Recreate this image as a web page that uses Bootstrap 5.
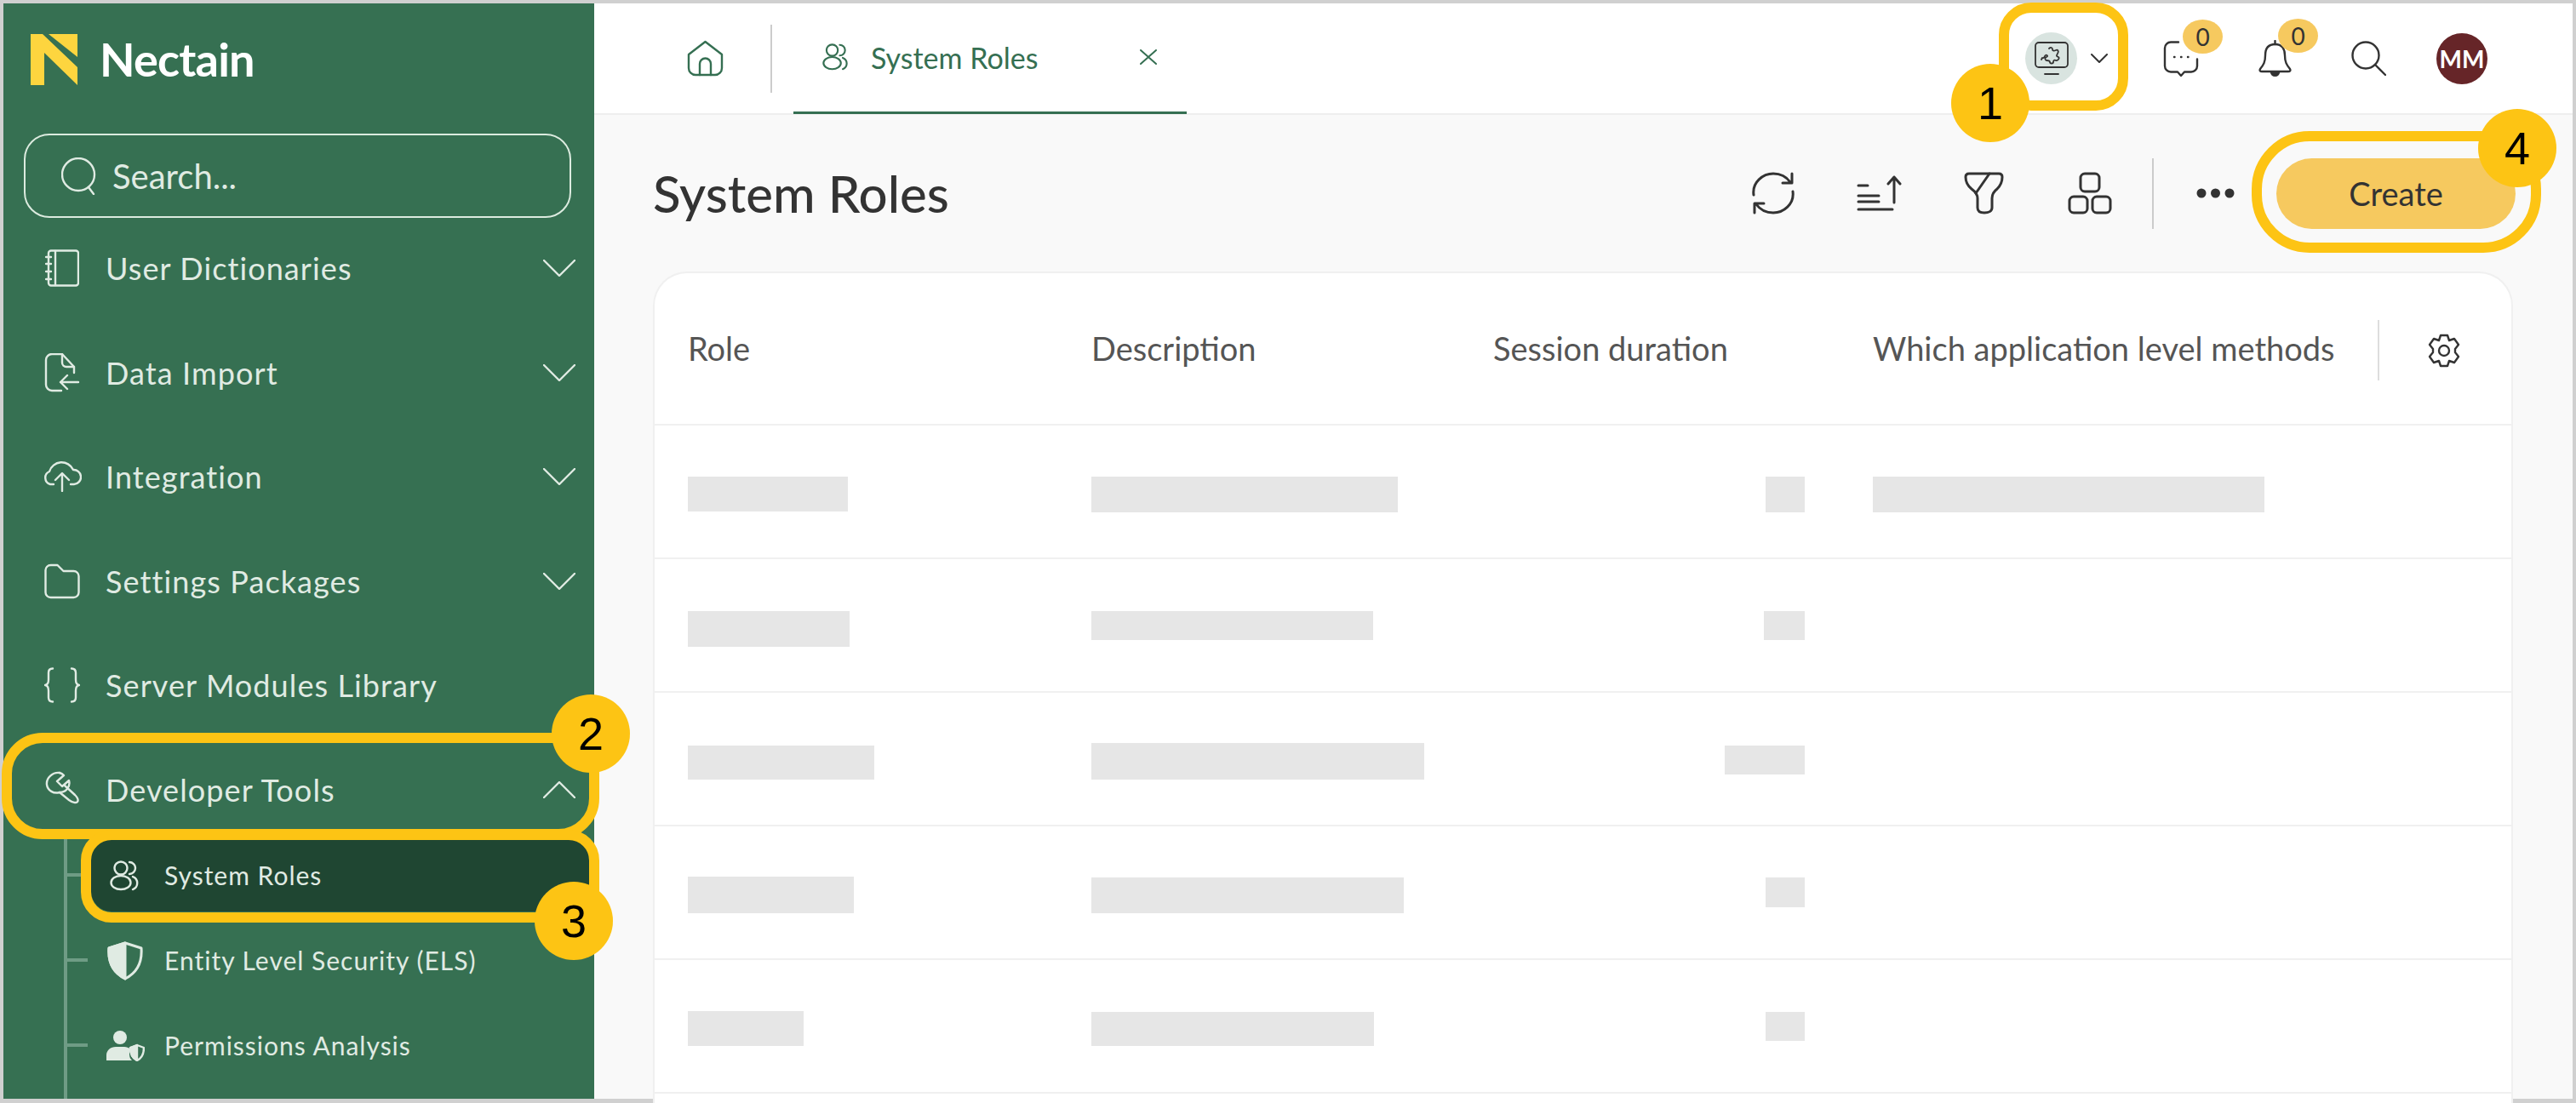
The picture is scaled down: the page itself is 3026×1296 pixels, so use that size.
<!DOCTYPE html>
<html lang="en">
<head>
  <meta charset="UTF-8">
  <title>System Roles - Nectain</title>
  <link href="https://cdn.jsdelivr.net/npm/bootstrap@5.3.3/dist/css/bootstrap.min.css" rel="stylesheet">
  <style>
    html, body { width: 3026px; height: 1296px; overflow: hidden; }
    body { font-family: Lato, "Liberation Sans", sans-serif; background: #fff; color: #333; position: relative; }
    svg { display: block; flex: none; fill: none; stroke: currentColor; stroke-width: 2.4; stroke-linecap: round; stroke-linejoin: round; }

    .frame { height: 1296px; border: 4px solid #d0d0d0; border-bottom-width: 5px; }

    /* sidebar */
    .side { width: 694px; height: 100%; background: #367052; color: #e0ebe3; overflow: hidden; }
    .brand { height: 153px; padding: 36px 0 0 32px; gap: 26px; }
    .brand-name { font-size: 54px; font-weight: 700; color: #fff; line-height: 60px; letter-spacing: -.8px; }
    .side-search { height: 99px; margin: 0 27px -2px 24px; border: 2px solid #dcebdf; border-radius: 30px; padding-left: 42px; gap: 18px; font-size: 40px; }
    .side-item { height: 122.5px; padding-left: 48px; font-size: 36px; letter-spacing: 1.1px; }
    .side-ico { width: 42px; margin-right: 30px; display: flex; justify-content: center; }
    .side-chev { margin-left: auto; margin-right: 22px; }
    .sub-list { margin: -3px 0 0 71px; border-left: 4px solid #6f9c85; height: 320px; }
    .sub-item { position: relative; height: 85px; margin: 0 6px 15px 28px; padding-left: 15px; border-radius: 24px; font-size: 30px; letter-spacing: 1px; }
    .sub-item::before { content: ""; position: absolute; left: -28px; top: 40px; width: 24px; height: 4px; background: #6f9c85; }
    .sub-item.active { background: #1f4632; }
    .sub-ico { width: 50px; margin-right: 21px; display: flex; justify-content: center; }

    /* top bar */
    .top-bar { height: 131px; background: #fff; border-bottom: 2px solid #eee; padding-left: 109px; padding-right: 100px; }
    .tab-sep { width: 2px; height: 80px; background: #ccc; margin-left: 55px; }
    .tab-on { width: 462px; height: 131px; margin-left: 25px; padding-left: 34px; border-bottom: 3px solid #356f52; color: #356f52; font-size: 34px; }
    .tab-on span { margin-left: 25px; }
    .tab-close { margin-left: auto; margin-right: 35px; }
    .env-dot { width: 61px; height: 61px; border-radius: 50%; background: #d9e4e0; color: #333; }
    .top-ico { position: relative; color: #333; }
    .top-count { position: absolute; top: -25px; left: 23px; width: 47px; height: 40px; border-radius: 50%; background: #f6c95f; font-size: 28px; line-height: 40px; text-align: center; color: #333; }
    .avatar { width: 60px; height: 60px; border-radius: 50%; background: #662528; color: #fff; font-size: 28px; font-weight: 700; }

    /* page */
    .page-area { background: #f9f9f9; min-width: 0; height: 1156px; }
    .tool-bar { height: 184px; padding: 0 67px 0 69px; color: #333; }
    .page-title { font-size: 60px; font-weight: 500; line-height: 1; color: #333; margin: 0; }
    .tool-sep { width: 2px; height: 83px; background: #ccc; }
    .btn-create { width: 281px; height: 83px; border: 0; border-radius: 42px; background: #f6c95f; color: #333; font-size: 38px; padding: 0; }
    .btn-create:hover { background: #f6c95f; color: #333; }

    .list-card { margin: 0 70px 0 69px; height: 980px; background: #fff; border: 2px solid #f0f0f0; border-bottom: 0; border-radius: 40px 40px 0 0; overflow: hidden; }
    .list-card .table { table-layout: fixed; width: 100%; margin: 0; --bs-table-bg: transparent; --bs-table-border-color: #f0f0f0; }
    .list-card th { height: 178px; font-size: 38px; font-weight: 400; color: #555; padding: 0 0 0 20px; vertical-align: middle; white-space: nowrap; border-bottom-width: 2px; }
    .list-card td { height: 157px; padding: 0 0 0 20px; vertical-align: middle; border-bottom-width: 2px; }
    .list-card th:first-child, .list-card td:first-child { padding-left: 39px; }
    .list-card td.col-time { padding-right: 60px; }
    .last-col { position: relative; }
    .last-col::after { content: ""; position: absolute; right: 0; top: 55px; height: 71px; width: 2px; background: #ddd; }
    .ske-bar { background: #e6e6e6; }
    .col-time .ske-bar { margin-left: auto; }

    /* numbered callouts drawn over the screenshot */
    .callout { position: absolute; border: 12px solid #fdc414; z-index: 5; }
    .call-num { position: absolute; z-index: 6; width: 92px; height: 92px; border-radius: 50%; background: #fdc414; color: #000; font-family: "Liberation Sans", Arial, sans-serif; font-size: 54px; line-height: 92px; text-align: center; }
  </style>
</head>
<body>
  <div class="frame d-flex">
    <aside class="side flex-shrink-0">
      <div class="brand d-flex align-items-start">
        <svg width="55" height="60" viewBox="0 0 55 60" style="stroke:none;fill:#fdd53f"><path d="M0 0H14L55 39V60L16 22V60H0Z"/><path d="M21 0H55V27Z"/></svg>
        <div class="brand-name">Nectain</div>
      </div>
      <div class="side-search d-flex align-items-center">
        <svg width="42" height="44" viewBox="0 0 42 44"><circle cx="20" cy="20" r="19"/><path d="M32 35l6 8"/></svg>
        <span>Search...</span>
      </div>

      <div class="side-item d-flex align-items-center">
        <span class="side-ico"><svg width="40" height="44" viewBox="0 0 40 44"><rect x="4" y="1.5" width="35" height="41" rx="3"/><path d="M12 2v40M1 9h6M1 17h6M1 26h6M1 35h6"/></svg></span>
        <span>User Dictionaries</span>
        <svg class="side-chev" width="38" height="20" viewBox="0 0 38 20"><path d="M1 1l18 18L37 1"/></svg>
      </div>
      <div class="side-item d-flex align-items-center">
        <span class="side-ico"><svg width="42" height="46" viewBox="0 0 42 46"><path d="M20 44H9a7 7 0 0 1-7-7V8a7 7 0 0 1 7-7h12l14 15v7"/><path d="M21 1v10a5 5 0 0 0 5 5h9M40 34H19M27 26l-8 8 8 8"/></svg></span>
        <span>Data Import</span>
        <svg class="side-chev" width="38" height="20" viewBox="0 0 38 20"><path d="M1 1l18 18L37 1"/></svg>
      </div>
      <div class="side-item d-flex align-items-center">
        <span class="side-ico"><svg width="46" height="36" viewBox="0 0 46 36"><path d="M13 27H9a8 8 0 0 1-1-15A15 15 0 0 1 36 10a8.500 8.500 0 0 1 1 17h-4"/><path d="M23 35V15M15 22l8-8 8 8"/></svg></span>
        <span>Integration</span>
        <svg class="side-chev" width="38" height="20" viewBox="0 0 38 20"><path d="M1 1l18 18L37 1"/></svg>
      </div>
      <div class="side-item d-flex align-items-center">
        <span class="side-ico"><svg width="42" height="42" viewBox="0 0 42 42"><path d="M1.500 8a6 6 0 0 1 6-6h8l7 7h12a6 6 0 0 1 6 6v19a6 6 0 0 1-6 6h-27a6 6 0 0 1-6-6Z"/></svg></span>
        <span>Settings Packages</span>
        <svg class="side-chev" width="38" height="20" viewBox="0 0 38 20"><path d="M1 1l18 18L37 1"/></svg>
      </div>
      <div class="side-item d-flex align-items-center">
        <span class="side-ico"><svg width="42" height="42" viewBox="0 0 42 42"><path d="M10 1.500c-4 0-5 2-5 5v8c0 4-1 6-4 6.500 3 .5 4 2.500 4 6.500v8c0 3 1 5 5 5M32 1.500c4 0 5 2 5 5v8c0 4 1 6 4 6.500-3 .5-4 2.500-4 6.500v8c0 3-1 5-5 5"/></svg></span>
        <span>Server Modules Library</span>
      </div>
      <div class="side-item d-flex align-items-center">
        <span class="side-ico"><svg width="42" height="44" viewBox="0 0 42 44"><path d="M18 2a11 11 0 0 1 5 3l-8 7 6 6 8-7a11 11 0 0 1-11 14l11 9c4 3 9 4 10 2 2-3-1-6-3-8L24 17"/><path d="M18 2C10 1 2 8 3 16c1 7 8 11 15 9"/></svg></span>
        <span>Developer Tools</span>
        <svg class="side-chev" width="38" height="20" viewBox="0 0 38 20"><path d="M1 19L19 1l18 18"/></svg>
      </div>

      <div class="sub-list">
        <div class="sub-item active d-flex align-items-center">
          <span class="sub-ico"><svg width="36" height="36" viewBox="0 0 36 36"><circle cx="13" cy="9" r="7.500"/><ellipse cx="13" cy="26" rx="11.500" ry="8"/><path d="M23 2a7 7 0 0 1 0 14M27 19a8 8 0 0 1 0 15"/></svg></span>
          <span>System Roles</span>
        </div>
        <div class="sub-item d-flex align-items-center">
          <span class="sub-ico"><svg width="44" height="46" viewBox="0 0 44 46" style="stroke-width:3"><path d="M22 2L41 8c1 14-3 28-19 36C6 36 2 22 3 8Z"/><path d="M22 2L3 8c-1 14 3 28 19 36Z" fill="currentColor"/></svg></span>
          <span>Entity Level Security (ELS)</span>
        </div>
        <div class="sub-item d-flex align-items-center">
          <span class="sub-ico"><svg width="46" height="36" viewBox="0 0 46 36"><circle cx="17" cy="8" r="8" fill="currentColor" stroke="none"/><path d="M1 35v-6c0-6 5-10 11-10h10c3 0 5 1 6 2v7c0 3 1 5 3 7Z" fill="currentColor" stroke="none"/><path d="M37 17l8 3c0 7-2 12-8 15-6-3-8-8-8-15Z"/><path d="M37 17l-8 3c0 7 2 12 8 15Z" fill="currentColor"/></svg></span>
          <span>Permissions Analysis</span>
        </div>
      </div>
    </aside>

    <div class="flex-grow-1 d-flex flex-column" style="min-width:0">
      <header class="top-bar d-flex align-items-center">
        <svg width="43" height="43" viewBox="0 0 43 43" style="color:#356f52"><path d="M2 17L21.500 2 41 17v16a8 8 0 0 1-8 8H10a8 8 0 0 1-8-8Z" /><path d="M15 41V28a6.500 6.500 0 0 1 13 0v13"/></svg>
        <div class="tab-sep"></div>
        <div class="tab-on d-flex align-items-center">
          <svg width="32" height="34" viewBox="0 0 36 36"><circle cx="13" cy="9" r="7.500"/><ellipse cx="13" cy="26" rx="11.500" ry="8"/><path d="M23 2a7 7 0 0 1 0 14M27 19a8 8 0 0 1 0 15"/></svg>
          <span>System Roles</span>
          <svg class="tab-close" width="20" height="18" viewBox="0 0 20 18" style="stroke-width:2"><path d="M1 1l18 16M19 1L1 17"/></svg>
        </div>

        <div class="env-dot ms-auto d-flex align-items-center justify-content-center">
          <svg width="40" height="40" viewBox="0 0 40 40" style="stroke-width:1.800"><rect x="1" y="1" width="38" height="29" rx="4"/><path d="M12 38h16"/><path d="M17 8c2-2 4-1 4 1s2 2 4 1 4 1 2 4-1 3 1 4-1 5-3 4-3 0-3 2-4 2-4 0-3-2-4-2-3-3 0-4-1-4-2-1-3 2-3 2-1 2-1 2-2 1-3Z"/></svg>
        </div>
        <svg class="ms-3" width="20" height="11" viewBox="0 0 20 11" style="color:#333;stroke-width:2"><path d="M1 1l9 9 9-9"/></svg>

        <div class="top-ico" style="margin-left:65px">
          <svg width="42" height="42" viewBox="0 0 42 42"><path d="M18 1.500H9a7 7 0 0 0-7 7v21a7 7 0 0 0 7 7h8l4 4.500 4-4.500h8a7 7 0 0 0 7-7v-8"/><path d="M13 19h.5M21 19h.5M29 19h.5"/></svg>
          <div class="top-count">0</div>
        </div>
        <div class="top-ico" style="margin-left:70px">
          <svg width="39" height="43" viewBox="0 0 39 43"><path d="M19.500 5C11 5 8 11 8 18c0 8-2 11-6 16-1 2 0 3 2 3h31c2 0 3-1 2-3-4-5-6-8-6-16 0-7-3-13-11.500-13Z"/><path d="M15 38c1 5 8 5 9 0" fill="currentColor"/><path d="M19.500 1v4"/></svg>
          <div class="top-count">0</div>
        </div>
        <svg class="top-ico" style="margin-left:70px" width="41" height="41" viewBox="0 0 41 41"><circle cx="17" cy="17" r="15.500"/><path d="M28 28l12 12"/></svg>
        <div class="avatar d-flex align-items-center justify-content-center" style="margin-left:59px">MM</div>
      </header>

      <main class="page-area flex-grow-1">
        <div class="tool-bar d-flex align-items-center">
          <h1 class="page-title me-auto">System Roles</h1>
          <svg width="52" height="50" viewBox="0 0 52 50" style="stroke-width:3"><path d="M3 27C1 12 14 2 26 2c8 0 15 3 20 10M48 2v11H37"/><path d="M49 23c2 15-11 25-23 25-8 0-15-3-20-10M4 48V37h11"/></svg>
          <svg style="margin-left:72px;stroke-width:3" width="53" height="42" viewBox="0 0 53 42"><path d="M2 12h11M2 24h24M2 31h24M2 40h40M44 32V2M37 10l7-8 7 8"/></svg>
          <svg style="margin-left:73px;stroke-width:3" width="47" height="50" viewBox="0 0 47 50"><path d="M6 2h35c3 0 4 2 4 4 0 6-2 10-6 14-4 3-6 7-6 11v11c0 4-4 6-9 6s-8-2-8-6V31c0-4-3-8-7-11-5-4-7-9-7-14 0-2 1-4 4-4Z"/><path d="M30 2L14 25"/></svg>
          <svg style="margin-left:75px;stroke-width:3" width="52" height="50" viewBox="0 0 52 50"><rect x="15" y="2" width="22" height="21" rx="5"/><rect x="2" y="29" width="21" height="19" rx="5"/><rect x="29" y="29" width="21" height="19" rx="5"/></svg>
          <div class="tool-sep" style="margin-left:47px"></div>
          <svg style="margin-left:50px;stroke:none;fill:#333" width="45" height="12" viewBox="0 0 45 12"><circle cx="6" cy="6" r="5.500"/><circle cx="22.500" cy="6" r="5.500"/><circle cx="39" cy="6" r="5.500"/></svg>
          <button class="btn btn-create" style="margin-left:49px">Create</button>
        </div>

        <div class="list-card">
          <table class="table">
            <colgroup><col style="width:493px"><col style="width:472px"><col style="width:446px"><col style="width:615px"><col></colgroup>
            <thead>
              <tr>
                <th>Role</th>
                <th>Description</th>
                <th>Session duration</th>
                <th class="last-col">Which application level methods</th>
                <th><svg class="mx-auto" style="transform:translate(-12px,2px);color:#333" width="40" height="40" viewBox="0 0 40 40"><circle cx="20" cy="20" r="6"/><path d="M16 2h8l2 6 6-2 5 7-4 5 0 4 4 5-5 7-6-2-2 6h-8l-2-6-6 2-5-7 4-5 0-4-4-5 5-7 6 2Z"/></svg></th>
              </tr>
            </thead>
            <tbody id="role-rows"></tbody>
          </table>
        </div>
      </main>
    </div>
  </div>

  <div class="callout" style="left:2348px;top:3px;width:152px;height:127px;border-radius:38px"></div>
  <div class="callout" style="left:2px;top:861px;width:702px;height:125px;border-radius:48px"></div>
  <div class="callout" style="left:95px;top:975px;width:609px;height:109px;border-radius:36px"></div>
  <div class="callout" style="left:2645px;top:154px;width:340px;height:143px;border-radius:68px"></div>
  <div class="call-num" style="left:2292px;top:75px">1</div>
  <div class="call-num" style="left:648px;top:816px">2</div>
  <div class="call-num" style="left:628px;top:1036px">3</div>
  <div class="call-num" style="left:2911px;top:128px">4</div>

  <script>
    // skeleton sizes per row: [width, height, offset from row middle]
    const rows = [
      { role: [188, 41, 3], desc: [360, 42, 3], time: [46, 42, 3], extra: [460, 42, 3] },
      { role: [190, 42, 4], desc: [331, 34, 0], time: [48, 34, 0] },
      { role: [219, 40, 4], desc: [391, 43, 3], time: [94, 34, 1] },
      { role: [195, 43, 3], desc: [367, 42, 3], time: [46, 35, 0] },
      { role: [136, 41, 3], desc: [332, 40, 3], time: [46, 34, 0] },
      {}
    ];

    function skeleton(size) {
      if (!size) return "";
      return `<div class="ske-bar" style="width:${size[0]}px;height:${size[1]}px;margin-top:${size[2] * 2}px"></div>`;
    }

    document.getElementById("role-rows").innerHTML = rows.map(r => `
      <tr>
        <td>${skeleton(r.role)}</td>
        <td>${skeleton(r.desc)}</td>
        <td class="col-time">${skeleton(r.time)}</td>
        <td>${skeleton(r.extra)}</td>
        <td></td>
      </tr>`).join("");
  </script>
  <script src="https://cdn.jsdelivr.net/npm/bootstrap@5.3.3/dist/js/bootstrap.bundle.min.js"></script>
</body>
</html>
